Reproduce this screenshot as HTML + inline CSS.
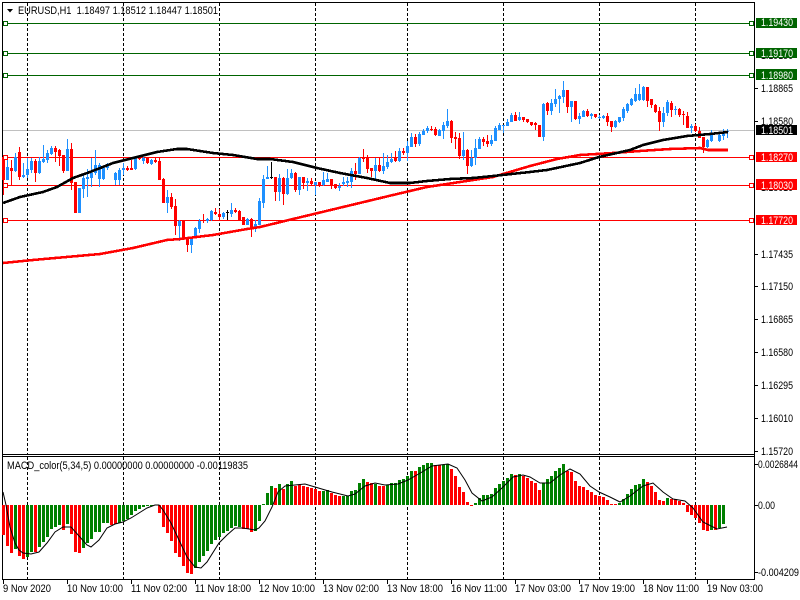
<!DOCTYPE html>
<html><head><meta charset="utf-8"><title>EURUSD,H1</title>
<style>html,body{margin:0;padding:0;background:#fff;width:800px;height:600px;overflow:hidden}svg{display:block}
text{font-family:"Liberation Sans",sans-serif;font-size:11px;fill:#000}</style></head>
<body>
<svg xmlns="http://www.w3.org/2000/svg" width="800" height="600" viewBox="0 0 800 600">
<g shape-rendering="crispEdges">
<!-- grey bid line -->
<rect x="3" y="130" width="751" height="1" fill="#c0c0c0"/>
<!-- vertical grid -->
<path d="M27.5 3V454M123.5 3V454M219.5 3V454M315.5 3V454M407.5 3V454M503.5 3V454M599.5 3V454M695.5 3V454M27.5 457V579M123.5 457V579M219.5 457V579M315.5 457V579M407.5 457V579M503.5 457V579M599.5 457V579M695.5 457V579" stroke="#000" stroke-width="1" stroke-dasharray="3 2" fill="none"/>
<!-- horizontal levels -->
<g fill="#006400"><rect x="3" y="23" width="747" height="1"/><rect x="3" y="53" width="747" height="1"/><rect x="3" y="75" width="747" height="1"/></g>
<g fill="#ff0000"><rect x="3" y="157" width="747" height="1"/><rect x="3" y="185" width="747" height="1"/><rect x="3" y="220" width="747" height="1"/></g>
<!-- frame -->
<g fill="#000"><rect x="2" y="2" width="753" height="1"/><rect x="2" y="2" width="1" height="578"/><rect x="754" y="2" width="1" height="578"/><rect x="2" y="454" width="753" height="1"/><rect x="2" y="456" width="753" height="1"/><rect x="2" y="579" width="753" height="1"/></g>
<!-- date ticks -->
<path d="M3.5 579V584M67.5 579V584M131.5 579V584M195.5 579V584M259.5 579V584M323.5 579V584M387.5 579V584M451.5 579V584M515.5 579V584M579.5 579V584M643.5 579V584M707.5 579V584" stroke="#000" fill="none"/>
<!-- price ticks -->
<path d="M755 88.5H758M755 121.5H758M755 254.5H758M755 286.5H758M755 319.5H758M755 352.5H758M755 385.5H758M755 418.5H758M755 451.5H758M755 464.5H758M755 505.5H758M755 572.5H758" stroke="#000" fill="none"/>
<!-- candles wicks -->
<path fill="none" stroke="#ff0000" stroke-width="1" d="M3.5 155V195M11.5 160V185M19.5 147V180M35.5 159V182M55.5 146V162M59.5 149V166M63.5 155V173M71.5 143V190M75.5 182V213M127.5 166V171M131.5 160V170M139.5 157V160M147.5 157V164M155.5 158V163M159.5 158V180M163.5 178V203M171.5 193V209M175.5 199V235M183.5 220V240M187.5 237V252M203.5 214V223M215.5 208V215M219.5 209V220M235.5 208V213M239.5 210V221M243.5 217V225M251.5 218V237M275.5 177V201M283.5 177V205M295.5 172V192M303.5 177V189M311.5 178V186M319.5 182V187M331.5 179V189M335.5 184V189M355.5 163V180M363.5 149V162M367.5 155V173M371.5 168V177M379.5 158V172M395.5 151V162M403.5 148V155M415.5 134V147M431.5 126V131M435.5 127V136M451.5 120V143M455.5 132V149M459.5 133V159M467.5 149V174M483.5 137V146M487.5 135V147M515.5 112V121M523.5 117V122M527.5 119V123M531.5 122V126M535.5 122V130M539.5 125V137M547.5 102V115M567.5 90V113M575.5 101V120M587.5 109V117M595.5 114V118M607.5 113V126M611.5 121V132M647.5 87V107M651.5 99V108M655.5 104V113M659.5 107V131M671.5 101V117M679.5 108V117M683.5 111V125M687.5 112V128M695.5 124V132M699.5 127V138M703.5 137V153"/>
<path fill="none" stroke="#ff0000" stroke-width="3" d="M3.5 157V180M11.5 168V171M19.5 152V177M35.5 161V173M55.5 148V152M59.5 150V156M63.5 155V171M71.5 149V183M75.5 182V213M127.5 168V170M131.5 168V170M139.5 158V159M147.5 157V163M155.5 160V162M159.5 161V180M163.5 179V203M171.5 197V207M175.5 206V226M183.5 220V238M187.5 237V245M203.5 220V221M215.5 212V214M219.5 214V217M235.5 210V212M239.5 211V220M243.5 217V225M251.5 219V228M275.5 177V192M283.5 178V194M295.5 173V190M303.5 177V183M311.5 181V184M319.5 182V186M331.5 179V185M335.5 184V188M355.5 171V174M363.5 158V159M367.5 158V169M371.5 168V171M379.5 165V171M395.5 158V161M403.5 151V153M415.5 137V144M431.5 129V130M435.5 129V135M451.5 121V138M455.5 137V139M459.5 138V156M467.5 150V166M483.5 139V142M487.5 141V144M515.5 115V121M523.5 117V120M527.5 119V122M531.5 122V125M535.5 123V125M539.5 125V137M547.5 103V111M567.5 90V107M575.5 101V119M587.5 111V116M595.5 114V117M607.5 116V122M611.5 121V127M647.5 87V101M651.5 99V105M655.5 105V112M659.5 111V122M671.5 103V110M679.5 109V115M683.5 114V115M687.5 116V128M695.5 126V131M699.5 131V138M703.5 137V147"/>
<path fill="none" stroke="#1e90ff" stroke-width="1" d="M7.5 157V180M15.5 153V172M23.5 163V178M27.5 158V178M31.5 158V173M39.5 157V174M43.5 145V163M47.5 150V163M51.5 146V155M67.5 139V168M79.5 188V213M83.5 173V198M87.5 169V197M91.5 158V187M95.5 150V175M99.5 163V187M103.5 166V180M107.5 163V170M115.5 172V185M119.5 168V185M123.5 163V175M135.5 157V170M143.5 157V164M151.5 159V165M167.5 190V213M179.5 220V241M191.5 237V253M195.5 227V238M199.5 219V233M207.5 218V223M211.5 210V221M223.5 212V219M231.5 203V217M247.5 218V225M255.5 220V232M259.5 198V225M263.5 175V208M267.5 166V179M279.5 174V201M287.5 169V195M291.5 169V179M299.5 177V195M307.5 178V191M315.5 182V195M323.5 172V186M327.5 173V182M339.5 183V191M343.5 177V186M347.5 177V187M351.5 168V188M359.5 157V174M375.5 158V180M383.5 153V174M387.5 155V169M391.5 153V163M399.5 148V162M407.5 141V161M411.5 133V147M419.5 132V146M423.5 129V135M427.5 126V133M439.5 129V136M443.5 122V139M447.5 109V128M463.5 132V160M471.5 150V167M475.5 139V165M479.5 137V149M491.5 135V146M495.5 126V141M499.5 123V130M503.5 125V133M507.5 119V126M511.5 113V122M519.5 112V121M543.5 103V141M551.5 99V115M555.5 89V107M559.5 95V113M563.5 81V103M571.5 101V122M579.5 113V124M583.5 110V117M591.5 113V119M599.5 115V119M603.5 115V119M615.5 120V128M619.5 117V123M623.5 107V121M627.5 103V113M631.5 98V106M635.5 88V102M639.5 84V101M643.5 86V101M663.5 107V127M667.5 100V116M675.5 106V115M691.5 124V133M707.5 139V148M711.5 130V142M719.5 132V142M723.5 129V140M727.5 129V138"/>
<path fill="none" stroke="#1e90ff" stroke-width="3" d="M7.5 167V180M15.5 157V171M23.5 175V177M27.5 169V175M31.5 161V170M39.5 161V173M43.5 159V162M47.5 153V160M51.5 148V154M67.5 149V171M79.5 188V213M83.5 178V189M87.5 177V179M91.5 173V178M95.5 165V173M99.5 165V179M103.5 168V179M107.5 166V168M115.5 173V180M119.5 170V180M123.5 168V170M135.5 158V169M143.5 158V161M151.5 160V164M167.5 197V203M179.5 221V226M191.5 237V245M195.5 228V237M199.5 221V229M207.5 219V221M211.5 211V220M223.5 213V217M231.5 210V214M247.5 219V225M255.5 224V228M259.5 201V225M263.5 179V203M267.5 177V179M279.5 178V192M287.5 178V194M291.5 173V178M299.5 177V190M307.5 181V183M315.5 182V185M323.5 180V185M327.5 179V182M339.5 186V188M343.5 182V184M347.5 181V183M351.5 171V182M359.5 158V174M375.5 165V171M383.5 166V171M387.5 162V167M391.5 159V162M399.5 151V161M407.5 146V153M411.5 137V147M419.5 134V144M423.5 131V135M427.5 128V131M439.5 130V136M443.5 125V131M447.5 121V126M463.5 150V156M471.5 158V166M475.5 148V158M479.5 139V149M491.5 140V144M495.5 128V141M499.5 125V130M503.5 125V126M507.5 122V126M511.5 115V122M519.5 117V120M543.5 104V137M551.5 103V111M555.5 99V104M559.5 96V99M563.5 90V97M571.5 101V107M579.5 116V119M583.5 111V117M591.5 114V116M599.5 117V118M603.5 116V118M615.5 121V127M619.5 117V122M623.5 109V118M627.5 104V111M631.5 99V105M635.5 94V101M639.5 94V100M643.5 87V100M663.5 113V122M667.5 102V113M675.5 109V110M691.5 126V128M707.5 140V147M711.5 135V141M719.5 135V141M723.5 133V136M727.5 131V132"/>
<path fill="none" stroke="#000" stroke-width="1" d="M227.5 210V220M271.5 162V179"/>
<path fill="none" stroke="#000" stroke-width="3" d="M227.5 212V213M271.5 177V178"/>
<!-- MACD histogram -->
<path fill="none" stroke="#ff0000" stroke-width="3" d="M3.5 505V535M7.5 505V546M11.5 505V553M19.5 505V556M23.5 505V559M35.5 505V552M63.5 505V530M71.5 505V534M75.5 505V552M79.5 505V553M111.5 505V525M115.5 505V524M159.5 505V513M163.5 505V527M167.5 505V533M171.5 505V541M175.5 505V553M179.5 505V557M183.5 505V566M187.5 505V573M191.5 505V574M243.5 505V529M247.5 505V529M251.5 505V532M275.5 505V488M283.5 505V489M295.5 505V486M299.5 505V485M303.5 505V486M307.5 505V487M311.5 505V488M315.5 505V489M319.5 505V491M331.5 505V493M335.5 505V495M339.5 505V496M367.5 505V482M371.5 505V483M379.5 505V486M383.5 505V486M415.5 505V471M435.5 505V465M439.5 505V465M451.5 505V469M455.5 505V476M459.5 505V487M463.5 505V492M467.5 505V502M471.5 505V506M515.5 505V475M523.5 505V476M527.5 505V478M531.5 505V481M535.5 505V483M539.5 505V490M567.5 505V471M571.5 505V472M575.5 505V481M579.5 505V486M583.5 505V487M587.5 505V490M591.5 505V492M595.5 505V495M599.5 505V496M603.5 505V497M607.5 505V500M611.5 505V504M615.5 505V504M647.5 505V482M651.5 505V486M655.5 505V492M659.5 505V500M663.5 505V501M671.5 505V499M675.5 505V499M679.5 505V501M683.5 505V503M687.5 505V512M691.5 505V515M695.5 505V518M699.5 505V523M703.5 505V530M707.5 505V531M715.5 505V530"/>
<path fill="none" stroke="#008000" stroke-width="3" d="M15.5 505V549M27.5 505V557M31.5 505V552M39.5 505V547M43.5 505V542M47.5 505V537M51.5 505V529M55.5 505V527M59.5 505V525M67.5 505V524M83.5 505V548M87.5 505V543M91.5 505V539M95.5 505V532M99.5 505V532M103.5 505V523M107.5 505V523M119.5 505V523M123.5 505V521M127.5 505V519M131.5 505V515M135.5 505V511M139.5 505V509M143.5 505V507M147.5 505V506M151.5 505V506M195.5 505V568M199.5 505V562M203.5 505V556M207.5 505V551M211.5 505V544M215.5 505V540M219.5 505V537M223.5 505V533M227.5 505V531M231.5 505V528M235.5 505V526M239.5 505V527M255.5 505V531M259.5 505V521M263.5 505V504M267.5 505V493M271.5 505V486M279.5 505V484M287.5 505V484M291.5 505V481M323.5 505V491M327.5 505V490M343.5 505V496M347.5 505V496M351.5 505V491M355.5 505V490M359.5 505V483M363.5 505V479M375.5 505V484M387.5 505V485M391.5 505V483M395.5 505V483M399.5 505V480M403.5 505V479M407.5 505V476M411.5 505V471M419.5 505V467M423.5 505V465M427.5 505V463M431.5 505V463M443.5 505V465M447.5 505V464M475.5 505V503M479.5 505V498M483.5 505V495M487.5 505V495M491.5 505V494M495.5 505V488M499.5 505V484M503.5 505V481M507.5 505V478M511.5 505V474M519.5 505V474M543.5 505V483M547.5 505V479M551.5 505V476M555.5 505V471M559.5 505V468M563.5 505V464M619.5 505V503M623.5 505V499M627.5 505V494M631.5 505V489M635.5 505V485M639.5 505V484M643.5 505V479M667.5 505V498M711.5 505V530M719.5 505V528M723.5 505V524"/>
<!-- moving averages -->
<polyline fill="none" stroke="#ff0000" stroke-width="2.6" points="3,263 33,260 100,254 133,248 167,240 180,239 213,235 247,229 260,227 293,219 343,207 393,195 427,187 460,182 493,177 530,166 557,159 580,155 613,153 640,151 670,149 700,148 708,150 728,150"/>
<polyline fill="none" stroke="#000" stroke-width="2.6" points="3,203 20,197 43,192 57,187 73,178 90,172 113,163 133,158 157,152 177,149 187,149 213,153 233,155 257,159 270,159 293,162 317,168 340,173 367,178 390,183 410,183 427,181 450,179 473,178 493,176 530,172 547,170 580,163 599,157 630,150 643,145 663,140 687,136 710,134 728,132"/>
<!-- level handles -->
<g fill="#fff" stroke="#006400"><rect x="3.5" y="21.5" width="4" height="4"/><rect x="3.5" y="51.5" width="4" height="4"/><rect x="3.5" y="73.5" width="4" height="4"/><rect x="749.5" y="21.5" width="4" height="4"/><rect x="749.5" y="51.5" width="4" height="4"/><rect x="749.5" y="73.5" width="4" height="4"/></g>
<g fill="#fff" stroke="#ff0000"><rect x="3.5" y="155.5" width="4" height="4"/><rect x="3.5" y="183.5" width="4" height="4"/><rect x="3.5" y="218.5" width="4" height="4"/><rect x="749.5" y="155.5" width="4" height="4"/><rect x="749.5" y="183.5" width="4" height="4"/><rect x="749.5" y="218.5" width="4" height="4"/></g>
</g>
<!-- MACD signal -->
<polyline fill="none" stroke="#000" stroke-width="1" points="3,492 6,505 10,527 15,543 19,550 23,553 31,554 39,552 47,543 55,532 63,527 71,527 79,536 87,545 91,547 99,540 107,528 115,524 123,522 131,518 139,513 147,508 155,505 159,505 163,510 171,523 179,540 187,557 195,567 201,568 207,562 219,543 227,535 235,528 243,528 255,530 259,528 265,521 272,507 278,492 285,486 295,485 305,484 315,487 332,492 348,496 355,494 365,486 375,483 385,485 398,484 408,480 422,472 432,466 448,464 457,468 465,480 472,493 482,501 492,497 502,488 513,477 523,475 530,477 540,483 550,483 560,475 570,469 580,474 590,486 599,492 610,497 620,502 630,496 643,486 653,483 663,492 673,499 685,501 693,508 703,522 717,529 727,527"/>
<!-- title -->
<path d="M7 9H13L10 12.5Z" fill="#000"/>
<text x="18" y="14" textLength="200" lengthAdjust="spacingAndGlyphs">EURUSD,H1&#160;&#160;1.18497 1.18512 1.18447 1.18501</text>
<text x="7" y="469" textLength="241" lengthAdjust="spacingAndGlyphs">MACD_color(5,34,5) 0.00000000 0.00000000 -0.00119835</text>
<!-- price labels -->
<g>
<text x="761" y="92" textLength="32" lengthAdjust="spacingAndGlyphs">1.18865</text>
<text x="761" y="125" textLength="32" lengthAdjust="spacingAndGlyphs">1.18580</text>
<text x="761" y="59" textLength="32" lengthAdjust="spacingAndGlyphs">1.19150</text>
<text x="761" y="191" textLength="32" lengthAdjust="spacingAndGlyphs">1.18010</text>
<text x="761" y="258" textLength="32" lengthAdjust="spacingAndGlyphs">1.17435</text>
<text x="761" y="290" textLength="32" lengthAdjust="spacingAndGlyphs">1.17150</text>
<text x="761" y="323" textLength="32" lengthAdjust="spacingAndGlyphs">1.16865</text>
<text x="761" y="356" textLength="32" lengthAdjust="spacingAndGlyphs">1.16580</text>
<text x="761" y="389" textLength="32" lengthAdjust="spacingAndGlyphs">1.16295</text>
<text x="761" y="422" textLength="32" lengthAdjust="spacingAndGlyphs">1.16010</text>
<text x="761" y="455" textLength="32" lengthAdjust="spacingAndGlyphs">1.15720</text>
<text x="758" y="468" textLength="40" lengthAdjust="spacingAndGlyphs">0.0026844</text>
<text x="758" y="509" textLength="17" lengthAdjust="spacingAndGlyphs">0.00</text>
<text x="758" y="576" textLength="41" lengthAdjust="spacingAndGlyphs">-0.004209</text>
</g>
<g shape-rendering="crispEdges">
<rect x="756" y="18" width="41" height="10" fill="#006400"/><rect x="756" y="48" width="41" height="10" fill="#006400"/><rect x="756" y="69" width="41" height="11" fill="#006400"/>
<rect x="756" y="125" width="41" height="10" fill="#000"/>
<rect x="756" y="152" width="41" height="10" fill="#ff0000"/><rect x="756" y="179" width="41" height="11" fill="#ff0000"/><rect x="756" y="215" width="41" height="10" fill="#ff0000"/>
</g>
<g style="fill:#fff">
<text x="761" y="26" textLength="32" lengthAdjust="spacingAndGlyphs" style="fill:#fff">1.19430</text>
<text x="761" y="57" textLength="32" lengthAdjust="spacingAndGlyphs" style="fill:#fff">1.19170</text>
<text x="761" y="79" textLength="32" lengthAdjust="spacingAndGlyphs" style="fill:#fff">1.18980</text>
<text x="761" y="134" textLength="32" lengthAdjust="spacingAndGlyphs" style="fill:#fff">1.18501</text>
<text x="761" y="161" textLength="32" lengthAdjust="spacingAndGlyphs" style="fill:#fff">1.18270</text>
<text x="761" y="189" textLength="32" lengthAdjust="spacingAndGlyphs" style="fill:#fff">1.18030</text>
<text x="761" y="224" textLength="32" lengthAdjust="spacingAndGlyphs" style="fill:#fff">1.17720</text>
</g>
<!-- date labels -->
<g>
<text x="3" y="592" textLength="48" lengthAdjust="spacingAndGlyphs">9 Nov 2020</text>
<text x="67" y="592" textLength="56" lengthAdjust="spacingAndGlyphs">10 Nov 10:00</text>
<text x="131" y="592" textLength="56" lengthAdjust="spacingAndGlyphs">11 Nov 02:00</text>
<text x="195" y="592" textLength="56" lengthAdjust="spacingAndGlyphs">11 Nov 18:00</text>
<text x="259" y="592" textLength="56" lengthAdjust="spacingAndGlyphs">12 Nov 10:00</text>
<text x="323" y="592" textLength="56" lengthAdjust="spacingAndGlyphs">13 Nov 02:00</text>
<text x="387" y="592" textLength="56" lengthAdjust="spacingAndGlyphs">13 Nov 18:00</text>
<text x="451" y="592" textLength="56" lengthAdjust="spacingAndGlyphs">16 Nov 11:00</text>
<text x="515" y="592" textLength="56" lengthAdjust="spacingAndGlyphs">17 Nov 03:00</text>
<text x="579" y="592" textLength="56" lengthAdjust="spacingAndGlyphs">17 Nov 19:00</text>
<text x="643" y="592" textLength="56" lengthAdjust="spacingAndGlyphs">18 Nov 11:00</text>
<text x="707" y="592" textLength="56" lengthAdjust="spacingAndGlyphs">19 Nov 03:00</text>
</g>
</svg>
</body></html>
